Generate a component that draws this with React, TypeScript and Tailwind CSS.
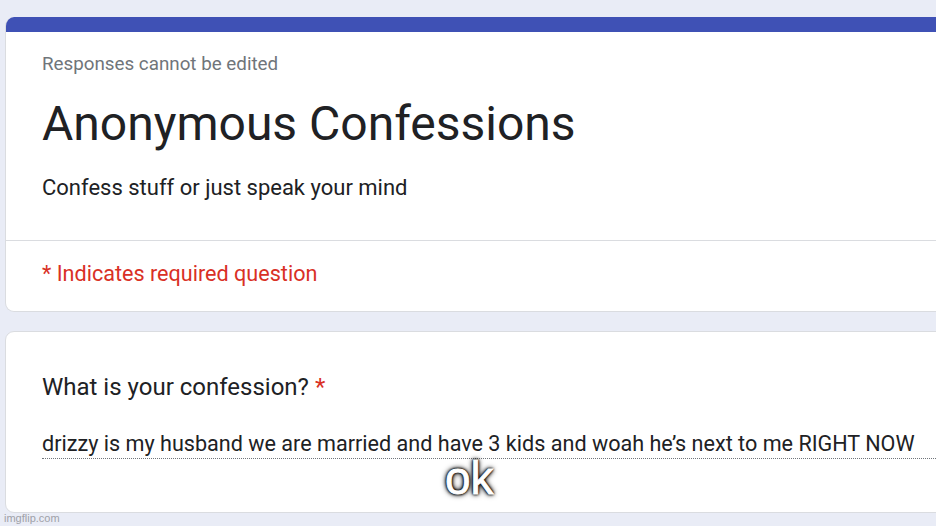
import React from "react";

export default function App() {
  return (
    <div className="relative w-[936px] h-[526px] overflow-hidden bg-[#e9ecf6]" style={{ fontFamily: "Roboto, 'Liberation Sans', sans-serif" }}>
      <div className="pl-[5px] pt-[17px]">
        <div className="w-[980px] rounded-[9px] bg-white border border-[#dadce0] border-t-0 overflow-hidden">
          <div className="h-[15px] bg-[#3f51b5]" />
          <div className="px-[36px] pt-[20px] pb-[38px] border-b border-[#dadce0]">
            <div className="text-[18.8px] leading-[24px] text-[#70757a]">Responses cannot be edited</div>
            <div className="mt-[20px] text-[48px] leading-[56px] text-[#202124]">Anonymous Confessions</div>
            <div className="mt-[22px] text-[22px] leading-[28px] text-[#202124]">Confess stuff or just speak your mind</div>
          </div>
          <div className="px-[36px] pt-[19px] pb-[23px]">
            <div className="text-[21.6px] leading-[28px] text-[#d93025]">* Indicates required question</div>
          </div>
        </div>
        <div className="mt-[19px] w-[980px] h-[182px] rounded-[9px] bg-white border border-[#dadce0]">
          <div className="px-[36px] pt-[41px]">
            <div className="text-[24px] leading-[28px] text-[#202124]">
              What is your confession? <span className="text-[#d93025]">*</span>
            </div>
            <div className="mt-[29px] text-[21.6px] leading-[28px] text-[#202124] border-b border-dotted border-[#70757a]">
              drizzy is my husband we are married and have 3 kids and woah he’s next to me RIGHT NOW
            </div>
          </div>
        </div>
      </div>
      <div
        className="absolute left-[445px] top-[460px] text-[46px] leading-[36px] text-white"
        style={{
          fontFamily: "'Liberation Sans', Arial, sans-serif",
          WebkitTextStroke: "0.8px #fff",
          textShadow: "0 0 2px #000, 0 0 2px #000, 0 0 3px #000, 0 0 4px #000, 0 0 6px #000",
        }}
      >
        ok
      </div>
      <div className="absolute left-[4px] top-[511px] text-[11px] leading-[14px] text-[#9fa1a8]" style={{ fontFamily: "'Liberation Sans', Arial, sans-serif" }}>
        imgflip.com
      </div>
    </div>
  );
}
